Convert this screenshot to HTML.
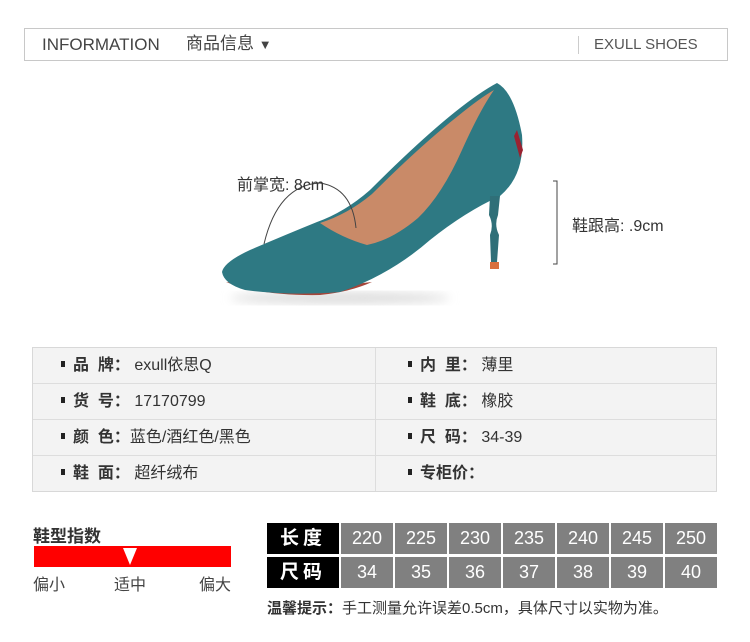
<!DOCTYPE html>
<html><head><meta charset="utf-8"><style>
*{margin:0;padding:0;box-sizing:border-box}
body{width:750px;height:642px;background:#fff;position:relative;overflow:hidden;font-family:"Liberation Sans","Noto Sans CJK SC",sans-serif;color:#333}
.a{position:absolute;white-space:nowrap}
.hdr{left:24px;top:28px;width:704px;height:33px;border:1px solid #c8c8c8}
.tbl{left:32px;top:347px;width:685px;height:145px;border:1px solid #d8d8d8;background:#f3f3f3}
.row{position:absolute;left:0;width:683px;height:36px;border-bottom:1px solid #ddd}
.cell{position:absolute;top:0;height:35px;line-height:35px;font-size:16px;color:#333}
.dot{display:inline-block;width:4px;height:6px;background:#222;margin-right:8px;vertical-align:middle;position:relative;top:-2px}
.sz{position:absolute;height:31px;line-height:31px;text-align:center;font-size:18px;color:#fff;background:#808080}
.bk{background:#000;font-weight:bold;font-size:19px;letter-spacing:4px}
</style></head><body>
<div class="a hdr"></div>
<div class="a" style="left:42px;top:35px;font-size:17px;line-height:20px;color:#444">INFORMATION</div>
<div class="a" style="left:186px;top:34px;font-size:17px;line-height:20px;color:#444">商品信息 <span style="font-size:13px">▼</span></div>
<div class="a" style="left:578px;top:36px;width:1px;height:18px;background:#ccc"></div>
<div class="a" style="left:594px;top:36px;font-size:15px;line-height:18px;color:#555">EXULL SHOES</div>

<svg class="a" style="left:0;top:0" width="750" height="340">
<defs><filter id="f"><feGaussianBlur stdDeviation="5"/></filter></defs>
<ellipse cx="340" cy="298" rx="110" ry="6" fill="#ddd" filter="url(#f)"/>
<path d="M226,282 Q260,296 320,295 Q350,292 372,282 L300,290 Z" fill="#a5463a"/>
<path d="M222,272 Q224,262 250,250 Q285,235 317,222 Q345,212 370,190 Q420,140 455,112 Q480,92 497,83 Q514,92 522,135 Q525,175 500,196 Q465,212 430,240 Q390,275 340,292 Q290,296 245,290 Q224,284 222,272Z" fill="#2e7983"/>
<path d="M320,223 Q348,214 372,194 Q420,146 458,116 Q480,98 494,90 Q480,110 462,150 Q442,195 418,218 Q392,240 367,245 Q342,238 320,223Z" fill="#c98a68"/>
<path d="M490,196 L500,196 L498,215 Q494,225 499,235 L497,262 L491,262 L490,235 Q494,225 489,215 Z" fill="#2f6f78"/>
<rect x="490" y="262" width="9" height="7" fill="#d9703e"/>
<path d="M517,130 L523,150 L520,158 L514,136Z" fill="#9a2230"/>
<path d="M264,244 Q278,185 320,183 Q352,188 356,228" fill="none" stroke="#444" stroke-width="1"/>
<path d="M553,181 L557,181 L557,264 L553,264" fill="none" stroke="#444" stroke-width="1"/>
</svg>
<div class="a" style="left:237px;top:171px;font-size:16px;color:#333">前掌宽: 8cm</div>
<div class="a" style="left:572px;top:212px;font-size:16px;color:#333">鞋跟高: .9cm</div>

<div class="a tbl">
<div class="row" style="top:0"></div><div class="row" style="top:36px"></div><div class="row" style="top:72px"></div><div class="row" style="top:108px;border:none"></div>
<div style="position:absolute;left:342px;top:0;width:1px;height:143px;background:#ddd"></div>
<div class="cell" style="left:28px;top:0"><span class="dot"></span><b>品 &nbsp;牌：</b> exull依思Q</div>
<div class="cell" style="left:28px;top:36px"><span class="dot"></span><b>货 &nbsp;号：</b> 17170799</div>
<div class="cell" style="left:28px;top:72px"><span class="dot"></span><b>颜 &nbsp;色：</b>蓝色/酒红色/黑色</div>
<div class="cell" style="left:28px;top:108px"><span class="dot"></span><b>鞋 &nbsp;面：</b> 超纤绒布</div>
<div class="cell" style="left:375px;top:0"><span class="dot"></span><b>内 &nbsp;里：</b> 薄里</div>
<div class="cell" style="left:375px;top:36px"><span class="dot"></span><b>鞋 &nbsp;底：</b> 橡胶</div>
<div class="cell" style="left:375px;top:72px"><span class="dot"></span><b>尺 &nbsp;码：</b> 34-39</div>
<div class="cell" style="left:375px;top:108px"><span class="dot"></span><b>专柜价：</b></div>
</div>

<div class="a" style="left:33px;top:522px;font-size:17px;font-weight:bold;color:#333">鞋型指数</div>
<div class="a" style="left:34px;top:546px;width:197px;height:21px;background:#f00"></div>
<svg class="a" style="left:122px;top:548px" width="16" height="18"><path d="M1,0 L15,0 L8,17Z" fill="#fff"/></svg>
<div class="a" style="left:33px;top:571px;font-size:16px;color:#444">偏小</div>
<div class="a" style="left:114px;top:571px;font-size:16px;color:#444">适中</div>
<div class="a" style="left:199px;top:571px;font-size:16px;color:#444">偏大</div>

<div class="sz bk" style="left:267px;top:523px;width:72px">长度</div>
<div class="sz bk" style="left:267px;top:557px;width:72px">尺码</div>
<div class="sz" style="left:341px;top:523px;width:52px">220</div>
<div class="sz" style="left:395px;top:523px;width:52px">225</div>
<div class="sz" style="left:449px;top:523px;width:52px">230</div>
<div class="sz" style="left:503px;top:523px;width:52px">235</div>
<div class="sz" style="left:557px;top:523px;width:52px">240</div>
<div class="sz" style="left:611px;top:523px;width:52px">245</div>
<div class="sz" style="left:665px;top:523px;width:52px">250</div>
<div class="sz" style="left:341px;top:557px;width:52px">34</div>
<div class="sz" style="left:395px;top:557px;width:52px">35</div>
<div class="sz" style="left:449px;top:557px;width:52px">36</div>
<div class="sz" style="left:503px;top:557px;width:52px">37</div>
<div class="sz" style="left:557px;top:557px;width:52px">38</div>
<div class="sz" style="left:611px;top:557px;width:52px">39</div>
<div class="sz" style="left:665px;top:557px;width:52px">40</div>
<div class="a" style="left:267px;top:597px;font-size:15px;color:#333"><b>温馨提示：</b>手工测量允许误差0.5cm，具体尺寸以实物为准。</div>
</body></html>
